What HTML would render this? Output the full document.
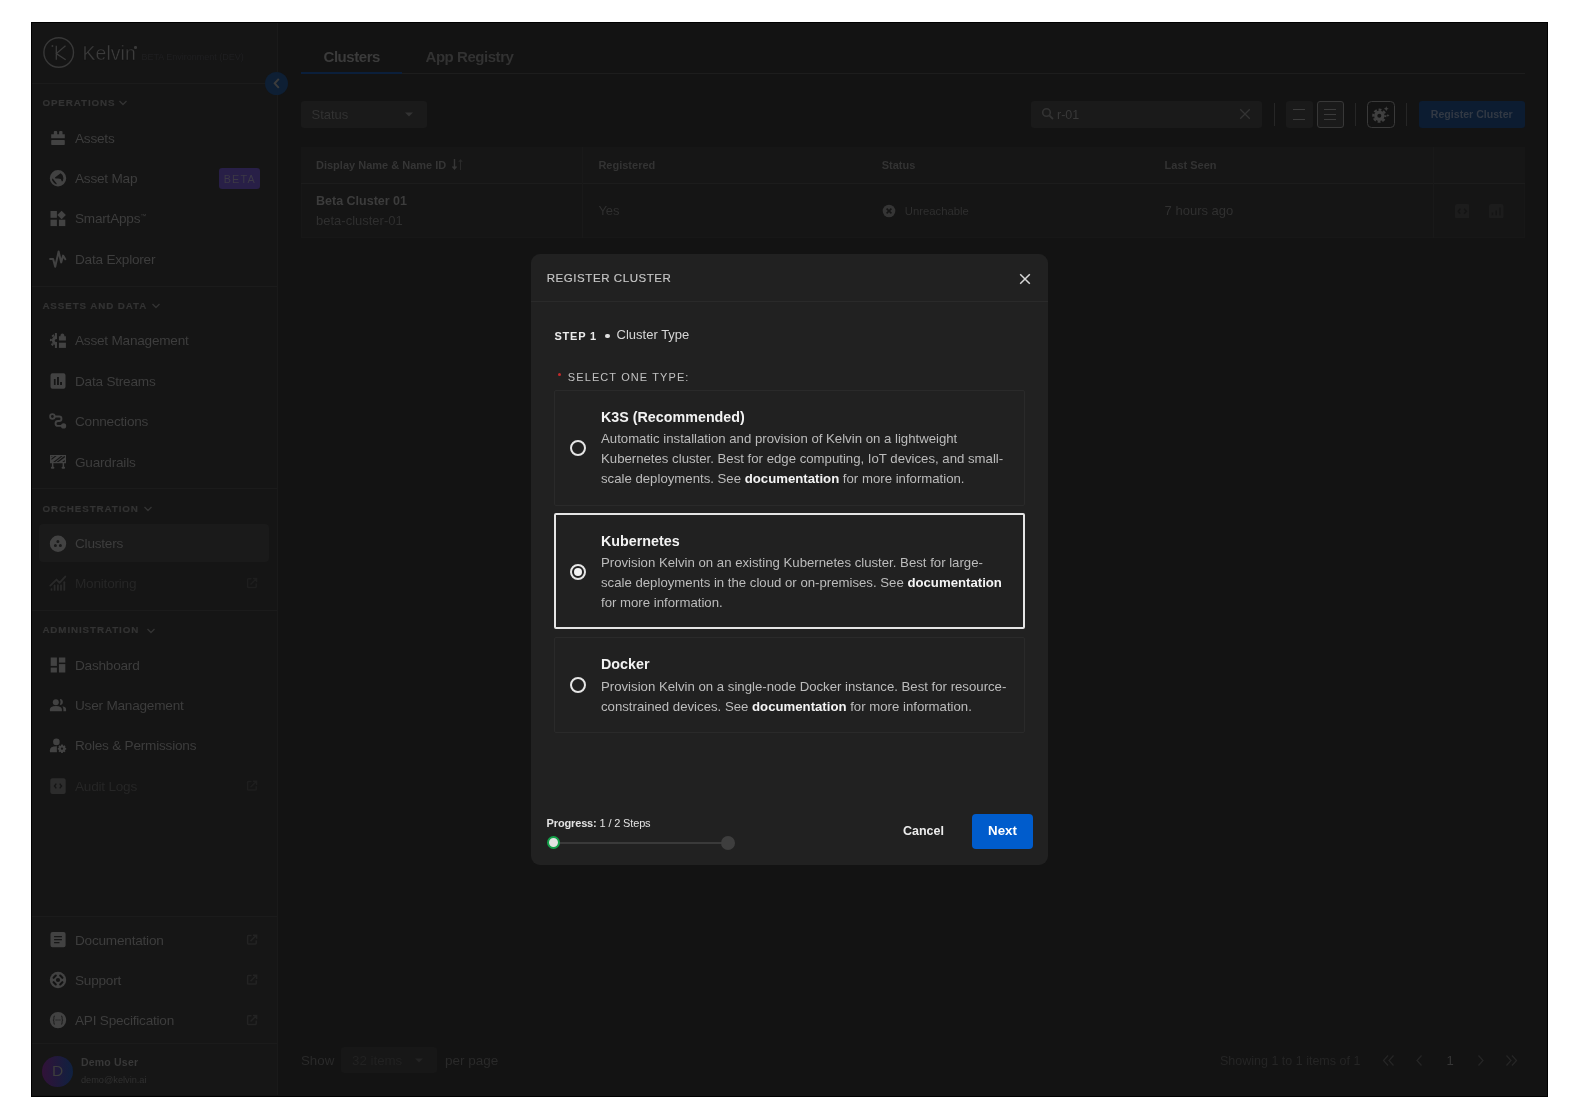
<!DOCTYPE html>
<html><head><meta charset="utf-8">
<style>
*{box-sizing:border-box;margin:0;padding:0}
html,body{width:1580px;height:1120px;background:#fff;overflow:hidden;font-family:"Liberation Sans",sans-serif}
.a{position:absolute}
#frame{position:absolute;left:31px;top:22px;width:1517px;height:1075px;border:1px solid #000;background:#131313;overflow:hidden}
.t{position:absolute;white-space:nowrap;line-height:20px}
.hl{position:absolute;height:1px;background:#1b1b1b}
.vl{position:absolute;width:1px;background:#1b1b1b}
.si{position:absolute;left:75px;font-size:13.6px;letter-spacing:-0.22px;color:#3d3d3d;line-height:20px;white-space:nowrap;margin-top:0.6px}
.sh{position:absolute;left:42.4px;font-size:9.8px;font-weight:700;letter-spacing:0.9px;color:#333;-webkit-text-stroke:0.2px #333;line-height:14px;white-space:nowrap}
.ic{position:absolute;left:49px;width:18px;height:18px}
.ext{position:absolute;left:245px;width:12px;height:12px}
.mt{color:#bcbcbc;font-size:13.2px;line-height:20px;position:absolute;left:601px;white-space:nowrap}
.mt b{color:#f4f4f4}
.ttl{position:absolute;left:601px;font-size:14.3px;font-weight:700;color:#f2f2f2;line-height:20px;white-space:nowrap}
.opt{position:absolute;left:554px;width:471px;border:1px solid #2a2a2a;border-radius:2px}
.radio{position:absolute;left:570px;width:16px;height:16px;border:2px solid #e6e6e6;border-radius:50%}
</style></head><body>
<div id="frame"></div>
<!-- everything positioned in page coords -->
<div id="page" class="a" style="left:0;top:0;width:1580px;height:1120px;will-change:transform">


<!-- MAIN -->
<div class="t" style="left:323.5px;top:47px;font-size:15px;font-weight:700;color:#3b3b3b;letter-spacing:-0.45px">Clusters</div>
<div class="t" style="left:425.5px;top:47px;font-size:15px;font-weight:700;color:#323232;letter-spacing:-0.45px">App Registry</div>
<div class="hl" style="left:301px;top:73px;width:1224px;background:#1d1d1d"></div>
<div class="a" style="left:301px;top:72px;width:101px;height:2px;background:#0b1f3b"></div>

<div class="a" style="left:301px;top:101px;width:126px;height:27px;border-radius:3px;background:#1a1a1a"></div>
<div class="t" style="left:311.5px;top:104.7px;font-size:13px;color:#323232">Status</div>
<svg class="a" style="left:404px;top:111px" width="10" height="8"><path d="M1 1.5H9L5 5.5Z" fill="#333"/></svg>

<div class="a" style="left:1031px;top:100.5px;width:231px;height:27px;border-radius:3px;background:#1a1a1a"></div>
<svg class="a" style="left:1041px;top:107px" width="14" height="14"><circle cx="5.5" cy="5.5" r="3.8" fill="none" stroke="#333" stroke-width="1.6"/><path d="M8.3 8.3L12 12" stroke="#333" stroke-width="1.8"/></svg>
<div class="t" style="left:1057px;top:105px;font-size:12.5px;color:#393939">r-01</div>
<svg class="a" style="left:1239px;top:108px" width="12" height="12"><path d="M1.2 1.2L10.8 10.8M10.8 1.2L1.2 10.8" stroke="#333" stroke-width="1.3"/></svg>
<div class="vl" style="left:1274px;top:103px;height:23px;background:#262626"></div>
<div class="a" style="left:1286px;top:101px;width:27px;height:27px;border-radius:3px;background:#1a1a1a"></div>
<div class="a" style="left:1293px;top:108.5px;width:12px;height:1.7px;background:#3b3b3b"></div>
<div class="a" style="left:1293px;top:118.5px;width:12px;height:1.7px;background:#3b3b3b"></div>
<div class="a" style="left:1316.5px;top:101px;width:27.5px;height:27px;border-radius:3px;border:1.7px solid #383838;background:#1a1a1a"></div>
<div class="a" style="left:1324px;top:108.5px;width:12px;height:1.7px;background:#3b3b3b"></div>
<div class="a" style="left:1324px;top:113.5px;width:12px;height:1.7px;background:#3b3b3b"></div>
<div class="a" style="left:1324px;top:118.5px;width:12px;height:1.7px;background:#3b3b3b"></div>
<div class="vl" style="left:1355px;top:103px;height:23px;background:#262626"></div>
<div class="a" style="left:1367px;top:100.5px;width:27.5px;height:27.5px;border-radius:4.5px;border:1.8px solid #3a3a3a"></div>
<svg class="a" style="left:1371px;top:105px" width="20" height="20" viewBox="0 0 20 20">
 <g fill="#404040"><circle cx="8.3" cy="10.7" r="5.2"/>
 <circle cx="8.3" cy="10.7" r="6" fill="none" stroke="#404040" stroke-width="2.2" stroke-dasharray="2.9 1.81" stroke-dashoffset="1.45"/>
 <path d="M15.25 1.3L16 3L17.7 3.75L16 4.5L15.25 6.2L14.5 4.5L12.8 3.75L14.5 3Z"/>
 <path d="M16.9 8.7L17.4 9.9L18.6 10.4L17.4 10.9L16.9 12.1L16.4 10.9L15.2 10.4L16.4 9.9Z"/></g>
 <circle cx="8.3" cy="10.7" r="2" fill="#131313"/>
</svg>
<div class="vl" style="left:1406px;top:103px;height:23px;background:#262626"></div>
<div class="a" style="left:1418.5px;top:101px;width:106.5px;height:27px;border-radius:3px;background:#0c1c31;color:#323944;font-size:10.6px;font-weight:700;line-height:27px;text-align:center">Register Cluster</div>

<!-- table -->
<div class="a" style="left:301px;top:147px;width:1224px;height:91px;background:#151515;border:1px solid #171717"></div>
<div class="a" style="left:301px;top:147px;width:1224px;height:36px;background:#161616"></div>
<div class="hl" style="left:301px;top:183px;width:1224px;background:#1c1c1c"></div>
<div class="vl" style="left:582px;top:147px;height:91px;background:#191919"></div>
<div class="vl" style="left:1433px;top:147px;height:91px;background:#191919"></div>
<div class="t" style="left:316px;top:155.3px;font-size:11px;font-weight:700;color:#353535">Display Name &amp; Name ID</div>
<svg class="a" style="left:451px;top:158px" width="13" height="13"><path d="M3.5 1V11M1.5 8.5L3.5 11L5.5 8.5" fill="none" stroke="#363636" stroke-width="1.4"/><path d="M9.5 12V2M7.8 4L9.5 1.6L11.2 4" fill="none" stroke="#2a2a2a" stroke-width="1"/></svg>
<div class="t" style="left:598.4px;top:155.3px;font-size:11px;font-weight:700;color:#333">Registered</div>
<div class="t" style="left:881.7px;top:155.3px;font-size:11px;font-weight:700;color:#333">Status</div>
<div class="t" style="left:1164.6px;top:155.3px;font-size:11px;font-weight:700;color:#333">Last Seen</div>
<div class="t" style="left:316px;top:190.8px;font-size:12.5px;font-weight:700;color:#3c3c3c">Beta Cluster 01</div>
<div class="t" style="left:316px;top:211px;font-size:13px;color:#2f2f2f">beta-cluster-01</div>
<div class="t" style="left:598.4px;top:201px;font-size:13px;color:#2f2f2f">Yes</div>
<svg class="a" style="left:882px;top:204px" width="14" height="14"><circle cx="7" cy="7" r="6.3" fill="#353535"/><path d="M4.6 4.6L9.4 9.4M9.4 4.6L4.6 9.4" stroke="#151515" stroke-width="1.5"/></svg>
<div class="t" style="left:904.8px;top:201px;font-size:11.3px;color:#2f2f2f">Unreachable</div>
<div class="t" style="left:1164.6px;top:201px;font-size:13px;color:#303030">7 hours ago</div>
<svg class="a" style="left:1454.5px;top:203.5px" width="14.5" height="14.5" viewBox="0 0 14.5 14.5"><rect width="14.5" height="14.5" rx="2" fill="#1c1c1c"/><path d="M5.3 4.8L3.2 7.3L5.3 9.8M9.2 4.8L11.3 7.3L9.2 9.8" fill="none" stroke="#141414" stroke-width="1.4"/></svg>
<svg class="a" style="left:1489px;top:203.5px" width="14.5" height="14.5" viewBox="0 0 14.5 14.5"><rect width="14.5" height="14.5" rx="2" fill="#1c1c1c"/><path d="M3.4 8.6V11.2M7.2 6.4V11.2M11 3.8V11.2" fill="none" stroke="#141414" stroke-width="1.5"/></svg>

<!-- pagination -->
<div class="t" style="left:301px;top:1051px;font-size:13.3px;color:#2a2a2a">Show</div>
<div class="a" style="left:341px;top:1047px;width:96px;height:26px;border-radius:3px;background:#171717"></div>
<div class="t" style="left:352px;top:1051px;font-size:13.3px;color:#222">32 items</div>
<svg class="a" style="left:414px;top:1057px" width="10" height="8"><path d="M1 1.5H9L5 5.5Z" fill="#242424"/></svg>
<div class="t" style="left:445px;top:1051px;font-size:13.5px;color:#2a2a2a">per page</div>
<div class="t" style="left:1220px;top:1050.5px;font-size:12.5px;color:#252525">Showing 1 to 1 items of 1</div>
<svg class="a" style="left:1380px;top:1052px" width="140" height="18" viewBox="0 0 140 18" fill="none" stroke="#262626" stroke-width="1.2">
 <path d="M8 3.5L3.5 8.5L8 13.5M13.5 3.5L9 8.5L13.5 13.5"/>
 <path d="M41.5 3.5L37 8.5L41.5 13.5"/>
 <path d="M98.5 3.5L103 8.5L98.5 13.5"/>
 <path d="M126.5 3.5L131 8.5L126.5 13.5M132 3.5L136.5 8.5L132 13.5"/>
</svg>
<div class="t" style="left:1446.5px;top:1050.5px;font-size:13px;color:#363636">1</div>

<!-- SIDEBAR -->
<div class="a" style="left:32px;top:23px;width:245px;height:1072px;background:#151515"></div>
<div class="a" style="left:32px;top:917px;width:245px;height:178px;background:#161616"></div>



<div class="vl" style="left:277px;top:23px;height:1072px;background:#1a1a1a"></div>
<svg class="a" style="left:42px;top:36px" width="34" height="34" viewBox="0 0 34 34">
 <circle cx="16.7" cy="16.5" r="14.8" fill="none" stroke="#383838" stroke-width="1.4"/>
 <path d="M14.3 9.7V23.7M23.5 9.7L14.3 17.6L23.7 23.7" fill="none" stroke="#3a3a3a" stroke-width="1.3"/>
 <circle cx="10.4" cy="10" r="0.9" fill="#3a3a3a"/>
</svg>
<div class="t" style="left:82.5px;top:41.3px;font-size:19.4px;line-height:24px;color:#3c3c3c;letter-spacing:0.1px;-webkit-text-stroke:0.35px #131313">Kelvin</div>
<div class="a" style="left:134px;top:46px;width:2.5px;height:2.5px;border-radius:50%;background:#3a3a3a"></div>
<div class="t" style="left:141.5px;top:50px;font-size:9px;line-height:14px;color:#1f1f21">BETA Environment (DEV)</div>
<div class="hl" style="left:32px;top:83px;width:245px"></div>

<div class="sh" style="top:96px">OPERATIONS</div>
<svg class="a" style="left:118px;top:99px" width="10" height="8"><path d="M1.5 2L5 5.5L8.5 2" fill="none" stroke="#333" stroke-width="1.4"/></svg>
<div class="si" style="top:128.3px">Assets</div>
<div class="si" style="top:168.6px">Asset Map</div>
<div class="a" style="left:219px;top:168px;width:41px;height:21px;border-radius:3px;background:#281f47;color:#3d3a46;font-size:10.8px;font-weight:400;letter-spacing:1.2px;line-height:22px;text-align:center;padding-left:0.5px">BETA</div>
<div class="si" style="top:208.9px">SmartApps<span style="font-size:6px;position:relative;top:-5px">™</span></div>
<div class="si" style="top:249.2px">Data Explorer</div>
<div class="hl" style="left:32px;top:286px;width:245px"></div>

<div class="sh" style="top:298.7px">ASSETS AND DATA</div>
<svg class="a" style="left:151px;top:302px" width="10" height="8"><path d="M1.5 2L5 5.5L8.5 2" fill="none" stroke="#333" stroke-width="1.4"/></svg>
<div class="si" style="top:330.8px">Asset Management</div>
<div class="si" style="top:371.2px">Data Streams</div>
<div class="si" style="top:411.4px">Connections</div>
<div class="si" style="top:452.1px">Guardrails</div>
<div class="hl" style="left:32px;top:488px;width:245px"></div>

<div class="sh" style="top:501.5px">ORCHESTRATION</div>
<svg class="a" style="left:143px;top:505px" width="10" height="8"><path d="M1.5 2L5 5.5L8.5 2" fill="none" stroke="#333" stroke-width="1.4"/></svg>
<div class="a" style="left:39px;top:524px;width:230px;height:38px;border-radius:4px;background:#1a1a1a"></div>
<div class="si" style="top:533.2px">Clusters</div>
<div class="si" style="top:573.5px;color:#262626">Monitoring</div>
<div class="hl" style="left:32px;top:610px;width:245px"></div>

<div class="sh" style="top:623.2px">ADMINISTRATION</div>
<svg class="a" style="left:146px;top:627px" width="10" height="8"><path d="M1.5 2L5 5.5L8.5 2" fill="none" stroke="#333" stroke-width="1.4"/></svg>
<div class="si" style="top:655.2px">Dashboard</div>
<div class="si" style="top:695.5px">User Management</div>
<div class="si" style="top:735.8px">Roles &amp; Permissions</div>
<div class="si" style="top:776.2px;color:#262626">Audit Logs</div>

<div class="hl" style="left:32px;top:916px;width:245px"></div>
<div class="si" style="top:930px">Documentation</div>
<div class="si" style="top:970.1px">Support</div>
<div class="si" style="top:1010.4px">API Specification</div>
<div class="hl" style="left:32px;top:1043px;width:245px"></div>
<div class="a" style="left:42px;top:1055.5px;width:31px;height:31px;border-radius:50%;background:linear-gradient(90deg,#311238,#0f2140);color:#3d3d3d;font-size:15.5px;font-weight:400;line-height:30px;text-align:center">D</div>
<div class="t" style="left:81px;top:1054px;font-size:10.5px;line-height:16px;font-weight:700;color:#383838;letter-spacing:0.2px">Demo User</div>
<div class="t" style="left:81px;top:1073.5px;font-size:9.2px;line-height:13px;color:#313131">demo@kelvin.ai</div>

<div class="a" style="left:265px;top:71.8px;width:23.2px;height:23.2px;border-radius:50%;background:#0e1f34"></div>
<svg class="a" style="left:0;top:0" width="1580" height="1120" viewBox="0 0 1580 1120">
<g fill="#424242">
 <!-- Assets -->
 <path d="M51.2 134.2h2.6v-2.2q0-1 1-1h1.4q1 0 1 1v2.2h1.9v-2.2q0-1 1-1h1.4q1 0 1 1v2.2h2.3v4h-13.6z"/>
 <rect x="51.2" y="140" width="13.6" height="5" rx="0.8"/>
 <!-- Globe -->
 <path fill-rule="evenodd" d="M58 170A8.2 8.2 0 1 1 58 186.4A8.2 8.2 0 1 1 58 170ZM55 177.6L57.6 175.4L60.6 173.3L62.5 175L63.4 178L62.9 181L61.9 181.6L60.8 178.9L58 178.4L55.4 178.4ZM52 178.4L53.1 178.9L56.7 183.6L56.3 184.4L54.1 183.1L52.2 180.6Z"/>
 <!-- SmartApps -->
 <rect x="50.5" y="211" width="6.4" height="6.8"/><rect x="50.5" y="219.7" width="6.4" height="6.4"/><rect x="58.9" y="219.7" width="6.4" height="6.4"/>
 <path d="M61.6 210.7L65.9 215L61.6 219.3L57.3 215Z"/>
 <!-- Asset mgmt -->
 <clipPath id="clg"><rect x="40" y="320" width="16.9" height="40"/></clipPath>
 <g clip-path="url(#clg)"><circle cx="56.9" cy="340.5" r="5"/><circle cx="56.9" cy="340.5" r="6" fill="none" stroke="#424242" stroke-width="2" stroke-dasharray="2.3 2.41" stroke-dashoffset="1.15"/></g>
 <rect x="54.9" y="333" width="2" height="15"/>
 <circle cx="56.3" cy="340.5" r="1.5" fill="#151515"/>
 <path d="M58.9 336.2h1.5q0-2.8 2-2.8q2 0 2 2.8h1.5v4.4h-7z"/>
 <rect x="58.9" y="342.7" width="7" height="5.2"/>
 <!-- Data streams -->
 <path fill-rule="evenodd" d="M52.5 373.3h11q2 0 2 2v11.4q0 2-2 2h-11q-2 0-2-2v-11.4q0-2 2-2zM53.9 379v5.9h1.7v-5.9zM57 376.9v8h1.9v-8zM60.1 381.9v3h1.9v-3z"/>
 <!-- Data Explorer -->
 <path d="M50.1 259H53.1L55.2 266.7L58.6 251.5L61.2 262.4L63.1 255.6L65.3 259.2" fill="none" stroke="#424242" stroke-width="2" stroke-linejoin="round" stroke-linecap="round"/>
 <!-- Connections -->
 <circle cx="52.4" cy="416.5" r="2.3" fill="none" stroke="#424242" stroke-width="1.8"/>
 <path d="M54.7 416.5H59.2A2.25 2.25 0 0 1 59.2 421H58A2.45 2.45 0 0 0 58 425.9H62" fill="none" stroke="#424242" stroke-width="1.9"/>
 <circle cx="63.6" cy="425.9" r="2.6"/>
 <!-- Guardrails -->
 <path fill-rule="evenodd" d="M50 454.9h16v8.4h-16zM51.5 458.5l3.3-2.4h1.8l-5.1 3.9zM53.2 462.1l7.7-6h1.9l-7.7 6zM56.6 462.1l7.7-6h0.5v1.3l-6.3 4.7zM62.2 462.1l2.6-2v1.5l-0.8 0.5zM51.5 456.1h1.4l-1.4 1z"/>
 <rect x="51.9" y="463" width="1.5" height="5"/><rect x="62.6" y="463" width="1.5" height="5"/>
 <rect x="50.9" y="466.8" width="3.5" height="1.9" rx="0.9"/><rect x="61.6" y="466.8" width="3.5" height="1.9" rx="0.9"/>
 <!-- Clusters -->
 <path fill-rule="evenodd" d="M58 535.6A8.2 8.2 0 1 1 58 552A8.2 8.2 0 1 1 58 535.6ZM57.9 540A1.5 1.5 0 1 0 57.9 543A1.5 1.5 0 1 0 57.9 540ZM55.4 543.9A1.5 1.5 0 1 0 55.4 546.9A1.5 1.5 0 1 0 55.4 543.9ZM60.4 543.9A1.5 1.5 0 1 0 60.4 546.9A1.5 1.5 0 1 0 60.4 543.9Z"/>
 <!-- Dashboard -->
 <rect x="50.7" y="657.5" width="6.2" height="8.4"/><rect x="50.7" y="667.6" width="6.2" height="4.9"/><rect x="58.9" y="657.5" width="6.4" height="5.1"/><rect x="58.9" y="664.1" width="6.4" height="8.4"/>
 <!-- User Mgmt -->
 <circle cx="55.8" cy="702.3" r="3"/>
 <path d="M49.9 711.2v-1.6q0-3.6 6-3.6q6 0 6 3.6v1.6z"/>
 <path d="M59.9 699.1A2.95 2.95 0 0 1 59.9 705A7 7 0 0 0 59.9 699.1z"/>
 <path d="M62.5 706.3q3.6 0.5 3.6 3.3v1.6h-2.7v-1.6q0-1.9-0.9-3.3z"/>
 <!-- Roles -->
 <circle cx="56.4" cy="741.9" r="3.3"/>
 <path d="M49.9 752.2v-2q0-3.9 6.5-3.9q0.3 0 0.5 0v5.9z"/>
 <path fill-rule="evenodd" d="M61.2 744.6h1.6l0.4 1.3 1.2-0.6 1.1 1.1-0.6 1.2 1.3 0.4v1.6l-1.3 0.4 0.6 1.2-1.1 1.1-1.2-0.6-0.4 1.3h-1.6l-0.4-1.3-1.2 0.6-1.1-1.1 0.6-1.2-1.3-0.4v-1.6l1.3-0.4-0.6-1.2 1.1-1.1 1.2 0.6zM62 747.4a1.2 1.2 0 1 0 0 2.4a1.2 1.2 0 1 0 0-2.4z"/>
 <!-- Documentation -->
 <path fill-rule="evenodd" d="M52.5 932.1h11.1q2 0 2 2v11.1q0 2-2 2h-11.1q-2 0-2-2v-11.1q0-2 2-2zM54.1 935.9v1.4h7.8v-1.4zM54.1 938.9v1.4h7.8v-1.4zM54.1 941.9v1.4h5.4v-1.4z"/>
 <!-- Support -->
 <circle cx="58" cy="980" r="8.2"/>
 <g stroke="#131313" stroke-width="2.1" stroke-linecap="round">
  <path d="M53.6 977.8L55.8 975.6M60.2 975.6L62.4 977.8M53.6 982.2L55.8 984.4M60.2 984.4L62.4 982.2"/>
 </g>
 <circle cx="58" cy="980" r="2.1" fill="#131313"/>
 <!-- API -->
 <path fill-rule="evenodd" d="M58 1011.9A8.2 8.2 0 1 1 58 1028.3A8.2 8.2 0 1 1 58 1011.9ZM54.8 1015.5q-1.3 0.2-1.3 1.8v1.6q0 1-0.9 1.2q0.9 0.2 0.9 1.2v1.6q0 1.6 1.3 1.8v-0.9q-0.5-0.2-0.5-1v-1.6q0-0.8-0.6-1.1q0.6-0.3 0.6-1.1v-1.6q0-0.8 0.5-1zM61.2 1015.5q1.3 0.2 1.3 1.8v1.6q0 1 0.9 1.2q-0.9 0.2-0.9 1.2v1.6q0 1.6-1.3 1.8v-0.9q0.5-0.2 0.5-1v-1.6q0-0.8 0.6-1.1q-0.6-0.3-0.6-1.1v-1.6q0-0.8-0.5-1zM55.6 1019.6h1v1h-1zM57.5 1019.6h1v1h-1zM59.4 1019.6h1v1h-1z"/>
</g>
<g fill="#292929">
 <!-- Monitoring -->
 <path d="M50.3 585.6L56.5 579.6L59.5 582.8L65.3 576.6" fill="none" stroke="#292929" stroke-width="1.9" stroke-linecap="round" stroke-linejoin="round"/>
 <rect x="50.6" y="588.3" width="1.8" height="2.5" rx="0.9"/><rect x="53.7" y="584.5" width="1.8" height="6.3" rx="0.9"/><rect x="57" y="584.3" width="1.8" height="6.5" rx="0.9"/><rect x="60.1" y="584.6" width="1.8" height="6.2" rx="0.9"/><rect x="63.4" y="581.3" width="1.8" height="9.5" rx="0.9"/>
 <!-- Audit -->
 <path fill="#2c2c2c" fill-rule="evenodd" d="M52.3 778.2h11.4q2 0 2 2v11.8q0 2-2 2h-11.4q-2 0-2-2v-11.8q0-2 2-2zM55.8 783.2L53.6 786L55.8 788.8L56.8 788L55.4 786L56.8 784zM60.2 783.2L62.4 786L60.2 788.8L59.2 788L60.6 786L59.2 784z"/>
</g>
<!-- external link icons -->
<g fill="none" stroke="#232323" stroke-width="1.5">
 <path d="M251.5 935.4H248.4Q247.6 935.4 247.6 936.2V943.3Q247.6 944 248.4 944H255.4Q256.2 944 256.2 943.3V940.2M250.5 941.1L256 935.6M253 935.2H256.6V938.8"/>
 <path d="M251.5 975.5H248.4Q247.6 975.5 247.6 976.3V983.4Q247.6 984.1 248.4 984.1H255.4Q256.2 984.1 256.2 983.4V980.3M250.5 981.2L256 975.7M253 975.3H256.6V978.9"/>
 <path d="M251.5 1015.8H248.4Q247.6 1015.8 247.6 1016.6V1023.7Q247.6 1024.4 248.4 1024.4H255.4Q256.2 1024.4 256.2 1023.7V1020.6M250.5 1021.5L256 1016M253 1015.6H256.6V1019.2"/>
</g>
<g fill="none" stroke="#1e1e1e" stroke-width="1.5">
 <path d="M251.5 578.8H248.4Q247.6 578.8 247.6 579.6V586.7Q247.6 587.4 248.4 587.4H255.4Q256.2 587.4 256.2 586.7V583.6M250.5 584.5L256 579M253 578.6H256.6V582.2"/>
 <path d="M251.5 781.5H248.4Q247.6 781.5 247.6 782.3V789.4Q247.6 790.1 248.4 790.1H255.4Q256.2 790.1 256.2 789.4V786.3M250.5 787.2L256 781.7M253 781.3H256.6V784.9"/>
</g>
</svg>
<svg class="a" style="left:270px;top:76px" width="14" height="16"><path d="M8.8 2.8L4.7 7.3L8.8 11.8" fill="none" stroke="#3c3c3c" stroke-width="2"/></svg>

<!-- MODAL -->
<div class="a" style="left:531px;top:254px;width:517px;height:611px;border-radius:9px;background:#212121"></div>
<div class="t" style="left:546.7px;top:268px;font-size:11.5px;color:#c6c6c6;letter-spacing:0.57px;-webkit-text-stroke:0.15px #c6c6c6">REGISTER CLUSTER</div>
<svg class="a" style="left:1018px;top:271.5px" width="14" height="14"><path d="M2.2 2.2L11.8 11.8M11.8 2.2L2.2 11.8" stroke="#d8d8d8" stroke-width="1.5"/></svg>
<div class="hl" style="left:531px;top:301px;width:517px;background:#2a2a2a"></div>
<div class="t" style="left:554.5px;top:326px;font-size:11px;font-weight:700;color:#ececec;letter-spacing:0.76px">STEP 1</div>
<div class="a" style="left:605px;top:333.5px;width:4.5px;height:4.5px;border-radius:50%;background:#e0e0e0"></div>
<div class="t" style="left:616.6px;top:325px;font-size:13px;color:#d6d6d6">Cluster Type</div>
<div class="a" style="left:558.2px;top:373.2px;width:3px;height:3px;border-radius:50%;background:#c42a2a"></div>
<div class="t" style="left:567.8px;top:366.5px;font-size:11px;color:#c2c2c2;letter-spacing:1.1px">SELECT ONE TYPE:</div>

<div class="opt" style="top:390px;height:116px"></div>
<div class="radio" style="top:440px"></div>
<div class="ttl" style="top:407.3px">K3S (Recommended)</div>
<div class="mt" style="top:429px">Automatic installation and provision of Kelvin on a lightweight<br>Kubernetes cluster. Best for edge computing, IoT devices, and small-<br>scale deployments. See <b>documentation</b> for more information.</div>

<div class="opt" style="top:513px;height:116px;border:2px solid #e4e4e4"></div>
<div class="radio" style="top:564px"></div>
<div class="a" style="left:574px;top:568px;width:8px;height:8px;border-radius:50%;background:#f2f2f2"></div>
<div class="ttl" style="top:531.4px">Kubernetes</div>
<div class="mt" style="top:553px">Provision Kelvin on an existing Kubernetes cluster. Best for large-<br>scale deployments in the cloud or on-premises. See <b>documentation</b><br>for more information.</div>

<div class="opt" style="top:637px;height:96px"></div>
<div class="radio" style="top:677px"></div>
<div class="ttl" style="top:654.4px">Docker</div>
<div class="mt" style="top:676.6px">Provision Kelvin on a single-node Docker instance. Best for resource-<br>constrained devices. See <b>documentation</b> for more information.</div>

<div class="t" style="left:546.6px;top:813px;font-size:11px;color:#e2e2e2;letter-spacing:-0.15px"><b>Progress:</b> 1 / 2 Steps</div>
<div class="a" style="left:553px;top:842px;width:175px;height:2px;background:#3a3a3a"></div>
<div class="a" style="left:546.6px;top:836px;width:13.4px;height:13.4px;border-radius:50%;background:#e2e2e2;border:2px solid #13a149"></div>
<div class="a" style="left:721px;top:835.7px;width:14px;height:14px;border-radius:50%;background:#3e3e3e"></div>
<div class="t" style="left:903px;top:821px;font-size:12.5px;font-weight:700;color:#ececec">Cancel</div>
<div class="a" style="left:972px;top:813.6px;width:61px;height:35px;border-radius:4px;background:#005ccc;color:#fff;font-size:13.3px;font-weight:700;line-height:34px;text-align:center">Next</div>
</div>
</body></html>
